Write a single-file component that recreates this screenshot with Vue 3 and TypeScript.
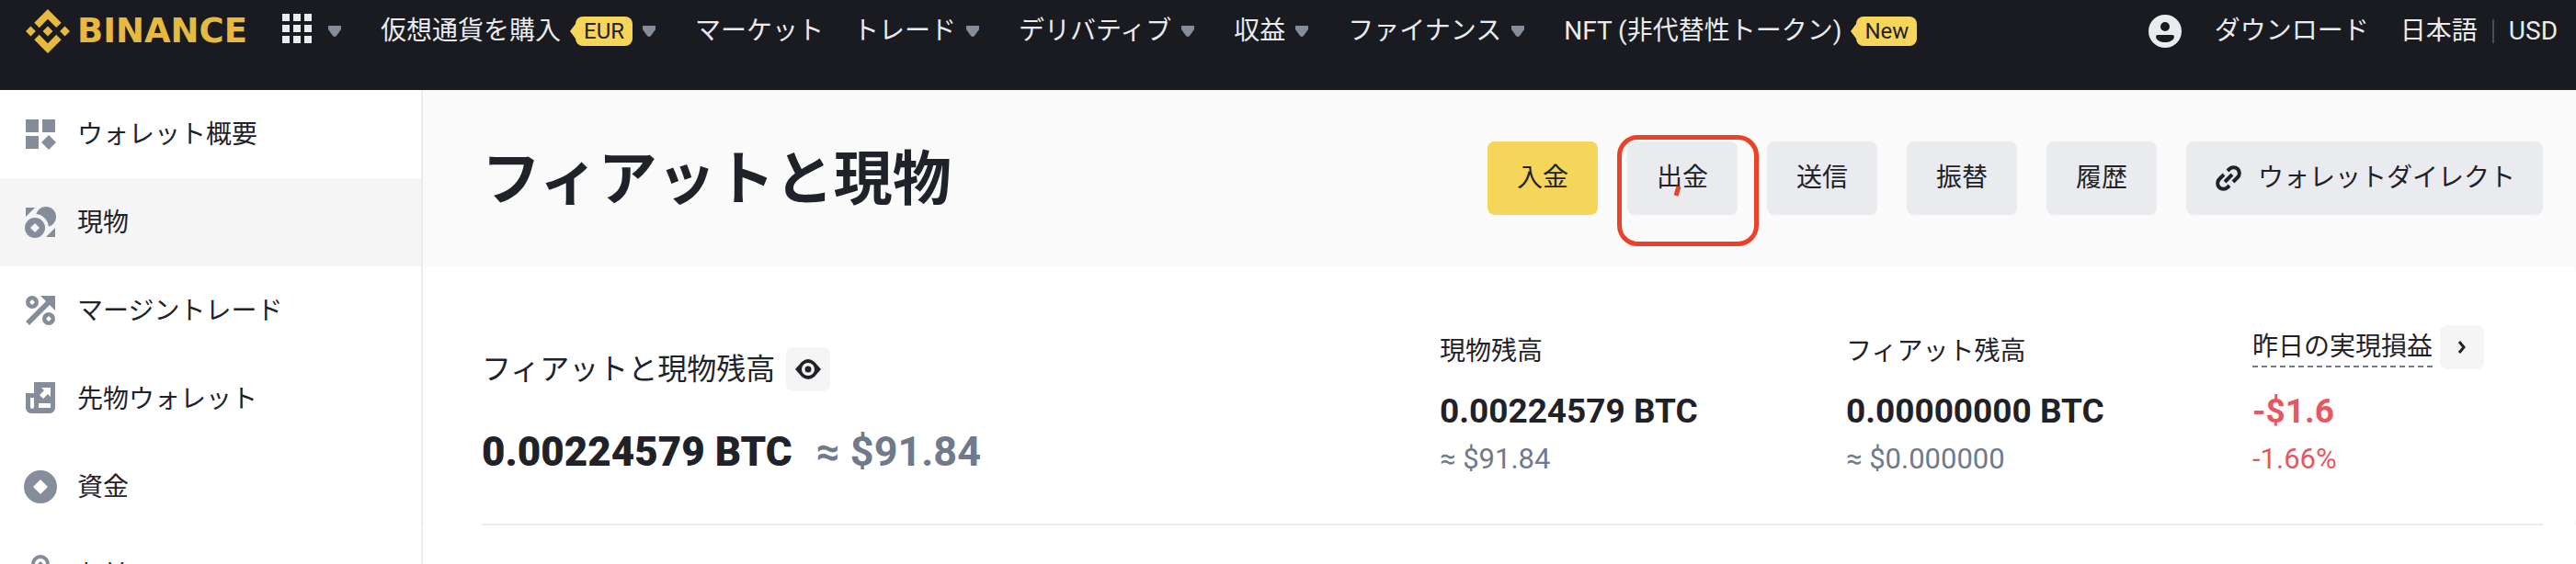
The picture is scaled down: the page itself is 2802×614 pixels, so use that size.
<script setup lang="ts">
interface NavItem {
  label: string
  badge?: string
  caret?: boolean
}

interface Balance {
  label: string
  value: string
  sub: string
  loss?: boolean
}

const navItems: NavItem[] = [
  { label: '仮想通貨を購入', badge: 'EUR', caret: true },
  { label: 'マーケット' },
  { label: 'トレード', caret: true },
  { label: 'デリバティブ', caret: true },
  { label: '収益', caret: true },
  { label: 'ファイナンス', caret: true },
  { label: 'NFT (非代替性トークン)', badge: 'New' },
]

const sideItems = [
  { id: 'overview', label: 'ウォレット概要' },
  { id: 'spot', label: '現物' },
  { id: 'margin', label: 'マージントレード' },
  { id: 'futures', label: '先物ウォレット' },
  { id: 'funding', label: '資金' },
  { id: 'earn', label: '収益' },
]

const actions = ['入金', '出金', '送信', '振替', '履歴']

const balances: Balance[] = [
  { label: '現物残高', value: '0.00224579 BTC', sub: '≈ $91.84' },
  { label: 'フィアット残高', value: '0.00000000 BTC', sub: '≈ $0.000000' },
  { label: '昨日の実現損益', value: '-$1.6', sub: '-1.66%', loss: true },
]
</script>

<template>
  <div class="app" lang="ja">
    <header class="topbar">
      <a class="brand" href="#">
        <svg class="brand-mark" viewBox="0 0 24 24" aria-hidden="true">
          <path d="M16.624 13.9202l2.7175 2.7154-7.353 7.353-7.353-7.352 2.7175-2.7164 4.6355 4.6595 4.6356-4.6595zm4.6366-4.6366L24 12l-2.7154 2.7164L18.5682 12l2.6924-2.7164zm-9.272.001l2.7163 2.6914-2.7164 2.7174v-.001L9.2721 12l2.7164-2.7154zm-9.2722-.001L5.4088 12l-2.6914 2.6924L0 12l2.7164-2.7164zM11.9885.0115l7.353 7.329-2.7174 2.7154-4.6356-4.6356-4.6355 4.6595-2.7174-2.7154 7.353-7.353z" />
        </svg>
        <span>BINANCE</span>
      </a>
      <button class="apps" type="button" aria-label="メニュー">
        <svg class="apps-grid" viewBox="0 0 32 38">
          <path d="M0 0h8v8H0zM12 0h8v8h-8zM24 0h8v8h-8zM0 12h8v8H0zM12 12h8v8h-8zM24 12h8v8h-8zM0 24h8v8H0zM12 24h8v8h-8zM24 24h8v8h-8z" />
        </svg>
        <svg class="caret" viewBox="0 0 14 12"><path d="M0 0h14v4L9 11q-2 2-4 0L0 4z" /></svg>
      </button>
      <nav class="nav">
        <a v-for="item in navItems" :key="item.label" href="#">
          <span>{{ item.label }}</span>
          <span v-if="item.badge" class="badge">{{ item.badge }}</span>
          <svg v-if="item.caret" class="caret" viewBox="0 0 14 12"><path d="M0 0h14v4L9 11q-2 2-4 0L0 4z" /></svg>
        </a>
      </nav>
      <div class="tools">
        <a class="user" href="#" aria-label="アカウント">
          <svg viewBox="0 0 36 36">
            <path fill-rule="evenodd" d="M18 0a18 18 0 1 1 0 36a18 18 0 0 1 0-36zM18 8a5 5 0 0 0-5 5a5 5 0 0 0 10 0a5 5 0 0 0-5-5zM10 22q-2 0-2 2c1 8 19 8 20 0q0-2-2-2z" />
          </svg>
        </a>
        <a href="#">ダウンロード</a>
        <div class="locale">
          <a href="#">日本語</a>
          <i></i>
          <a href="#">USD</a>
        </div>
      </div>
    </header>

    <div class="body">
      <aside class="sidebar">
        <a
          v-for="item in sideItems"
          :key="item.id"
          href="#"
          :class="{ active: item.id === 'spot' }"
        >
          <svg viewBox="0 0 36 36" aria-hidden="true">
            <path v-if="item.id === 'overview'" d="M2 2h14v14H2zM20 2h14v14H20zM2 20h14v14H2zM27 19l8 8l-8 8l-8-8z" />
            <g v-else-if="item.id === 'spot'">
              <path d="M2 2h10L2 12zM34 34H24L34 24z" />
              <circle cx="24" cy="12" r="11" />
              <circle class="gap" cx="12" cy="24" r="13" />
              <path class="hole" d="M12 19l5 5l-5 5l-5-5z" />
            </g>
            <g v-else-if="item.id === 'margin'">
              <path fill-rule="evenodd" d="M9 2a7 7 0 1 1 0 14a7 7 0 0 1 0-14zM9 6l-3 3l3 3l3-3zM27 20a7 7 0 1 1 0 14a7 7 0 0 1 0-14zM27 24l-3 3l3 3l3-3z" />
              <path d="M18 2h16v16l-6-6L6 34l-4-4L24 8z" />
            </g>
            <path v-else-if="item.id === 'futures'" fill-rule="evenodd" d="M11 0h23v28a6 6 0 0 1-6 6H8a6 6 0 0 1-6-6V12h9zM7 17v10q0 2 2 2t2-2V17zM16 23v5h13v-5zM19 6h10v10l-3-3l-5 5l-4-4l5-5z" />
            <path v-else-if="item.id === 'funding'" fill-rule="evenodd" d="M18 0a18 18 0 1 1 0 36a18 18 0 0 1 0-36zM18 10l-8 8l8 8l8-8z" />
            <g v-else>
              <circle class="ring" cx="18" cy="6" r="8" />
              <path d="M18 3l5 5l-5 5l-5-5zM6 18h24v16H6z" />
            </g>
          </svg>
          <span>{{ item.label }}</span>
        </a>
      </aside>

      <main class="main">
        <div class="backdrop">
          <div class="heading">
            <h1>フィアットと現物</h1>
            <div class="actions">
              <button
                v-for="(action, index) in actions"
                :key="action"
                type="button"
                :class="{ primary: index === 0 }"
              >
                {{ action }}
                <svg v-if="action === '出金'" class="marker" viewBox="0 0 154 121" aria-hidden="true">
                  <rect x="2.5" y="2.5" width="149" height="116" rx="20" />
                  <path d="M67 56l-3 10" />
                </svg>
              </button>
              <button class="direct" type="button">
                <svg viewBox="0 0 32 32" aria-hidden="true">
                  <path d="M12 20l8-8M15 8l2-2a6.2 6.2 0 0 1 9 9l-5 5M17 24l-2 2a6.2 6.2 0 0 1-9-9l5-5" />
                </svg>
                ウォレットダイレクト
              </button>
            </div>
          </div>

          <section class="card">
            <div class="summary">
              <div class="total">
                <div class="total-label">
                  <span>フィアットと現物残高</span>
                  <button class="square" type="button" aria-label="残高を表示">
                    <svg class="eye" viewBox="0 0 28 22">
                      <path fill-rule="evenodd" d="M0 11L7 3q7-6 14 0l7 8l-7 8q-7 6-14 0zM14 4a7 7 0 1 0 0 14a7 7 0 0 0 0-14zM14 7.500a3.500 3.500 0 1 1 0 7a3.500 3.500 0 0 1 0-7z" />
                    </svg>
                  </button>
                </div>
                <div class="total-value">
                  <strong>0.00224579 BTC</strong>
                  <span>≈ $91.84</span>
                </div>
              </div>
              <div v-for="item in balances" :key="item.label" class="balance" :class="{ loss: item.loss }">
                <div class="balance-label">
                  <span>{{ item.label }}</span>
                  <button v-if="item.loss" class="square" type="button" aria-label="詳細">
                    <svg class="chevron" viewBox="0 0 10 14"><path d="M2 1l5 6l-5 6" /></svg>
                  </button>
                </div>
                <div class="balance-value">{{ item.value }}</div>
                <div class="balance-sub">{{ item.sub }}</div>
              </div>
            </div>
          </section>
        </div>
      </main>
    </div>
  </div>
</template>

<style>
html,
body {
  margin: 0;
  background: #fff;
}
body {
  overflow: hidden;
}
</style>

<style scoped>
.app {
  height: 100vh;
  overflow: hidden;
  display: flex;
  flex-direction: column;
  font-family: Roboto, "Noto Sans CJK JP", sans-serif;
  font-size: 28px;
  line-height: 40px;
  color: #1f2329;
}
a {
  color: inherit;
  text-decoration: none;
  white-space: nowrap;
}
button {
  font: inherit;
  color: inherit;
  border: 0;
  padding: 0;
  background: none;
  cursor: pointer;
}
svg {
  display: block;
  flex: none;
}

/* Top bar */
.topbar {
  flex: none;
  display: flex;
  align-items: center;
  height: 68px;
  padding: 0 20px 30px 28px;
  background: #1a1b20;
  color: #eaebef;
}
.brand {
  display: flex;
  align-items: center;
  gap: 8px;
  margin-right: 38px;
  color: #e6b93f;
  font-family: "DejaVu Sans", sans-serif;
  font-size: 37px;
  font-weight: 700;
}
.brand-mark {
  width: 48px;
  height: 48px;
  fill: #e6b93f;
}
.apps {
  display: flex;
  align-items: center;
  gap: 18px;
  margin-right: 43px;
}
.apps-grid {
  width: 32px;
  height: 38px;
  fill: #eaebef;
}
.caret {
  width: 14px;
  height: 12px;
  fill: #858c9a;
}
.nav {
  display: flex;
  align-items: center;
  gap: 32px;
}
.nav a {
  display: flex;
  align-items: center;
}
.nav .caret {
  margin: 0 11px;
}
.badge {
  position: relative;
  margin-left: 16px;
  padding: 0 9px;
  border-radius: 8px;
  background: #f5d65b;
  color: #1f2329;
  font-size: 24px;
  line-height: 32px;
}
.badge::before {
  content: "";
  position: absolute;
  left: -6px;
  top: 8px;
  border: solid transparent;
  border-width: 8px 6px 8px 0;
  border-right-color: #f5d65b;
}
.tools {
  display: flex;
  align-items: center;
  gap: 34px;
  margin-left: auto;
}
.user svg {
  width: 36px;
  height: 36px;
  margin-right: 2px;
  fill: #eaebef;
}
.locale {
  display: flex;
  align-items: center;
  gap: 16px;
}
.locale i {
  width: 2px;
  height: 26px;
  background: #474d57;
}

/* Side bar */
.body {
  flex: 1;
  min-height: 0;
  display: flex;
}
.sidebar {
  flex: none;
  width: 458px;
  border-right: 2px solid #eaebef;
  background: #fff;
}
.sidebar a {
  display: flex;
  align-items: center;
  gap: 22px;
  height: 96px;
  padding: 0 26px;
}
.sidebar a.active {
  background: #f5f5f5;
}
.sidebar span {
  padding-top: 2px;
}
.sidebar svg {
  width: 36px;
  height: 36px;
  overflow: visible;
  fill: #858c9a;
}
.sidebar .gap {
  stroke: #f5f5f5;
  stroke-width: 4px;
}
.sidebar .hole {
  fill: #f5f5f5;
}
.sidebar .ring {
  fill: none;
  stroke: #858c9a;
  stroke-width: 4px;
}

/* Main */
.main {
  flex: 1;
  min-width: 0;
}
.backdrop {
  background: #fafafa;
}
.heading {
  display: flex;
  align-items: center;
  justify-content: space-between;
  height: 192px;
  padding: 0 36px 0 64px;
}
h1 {
  margin: 0;
  padding-top: 4px;
  font-size: 64px;
  line-height: 80px;
  font-weight: 700;
}
.actions {
  display: flex;
  gap: 32px;
}
.actions button {
  position: relative;
  display: flex;
  align-items: center;
  height: 80px;
  padding: 0 32px;
  border-radius: 8px;
  background: #eaebef;
  white-space: nowrap;
}
.actions button.primary {
  background: #f5d65b;
}
.marker {
  position: absolute;
  left: -11px;
  top: -7px;
  width: 154px;
  height: 121px;
  fill: none;
  stroke: #ec4126;
  stroke-width: 5px;
}
.actions .direct {
  gap: 16px;
  padding: 0 30px;
}
.direct svg {
  width: 32px;
  height: 32px;
  fill: none;
  stroke: #1f2329;
  stroke-width: 4px;
}
.card {
  padding: 0 36px 0 64px;
  border-radius: 8px;
  background: #fff;
}
.summary {
  display: grid;
  grid-template-columns: 1042fr 442fr 442fr 316fr;
  padding: 64px 0 48px;
  border-bottom: 2px solid #eaebef;
}
.total {
  padding-top: 24px;
}
.total-label {
  display: flex;
  align-items: center;
  gap: 12px;
  font-size: 32px;
}
.square {
  display: flex;
  align-items: center;
  justify-content: center;
  width: 48px;
  height: 48px;
  border-radius: 8px;
  background: #f5f5f5;
}
.eye {
  width: 28px;
  height: 22px;
  fill: #1f2329;
}
.total-value {
  display: flex;
  gap: 26px;
  margin-top: 36px;
  font-size: 45px;
  line-height: 60px;
  font-weight: 700;
}
.total-value strong {
  font-size: 44px;
}
.total-value span {
  color: #707a8a;
}
.balance-label {
  display: flex;
  align-items: center;
  gap: 8px;
  height: 58px;
}
.loss .balance-label {
  height: 48px;
  padding-bottom: 10px;
}
.loss .balance-label span {
  height: 42px;
  padding-top: 2px;
  background: repeating-linear-gradient(90deg, #707a8a 0 6px, transparent 6px 10px) left bottom / 100% 2px no-repeat;
}
.chevron {
  width: 10px;
  height: 14px;
  fill: none;
  stroke: #1f2329;
  stroke-width: 3px;
}
.balance-value {
  margin-top: 10px;
  font-size: 37px;
  line-height: 52px;
  font-weight: 700;
}
.balance-sub {
  margin-top: 4px;
  font-size: 31px;
  line-height: 44px;
  color: #707a8a;
}
.loss .balance-value,
.loss .balance-sub {
  color: #e85664;
}
</style>
